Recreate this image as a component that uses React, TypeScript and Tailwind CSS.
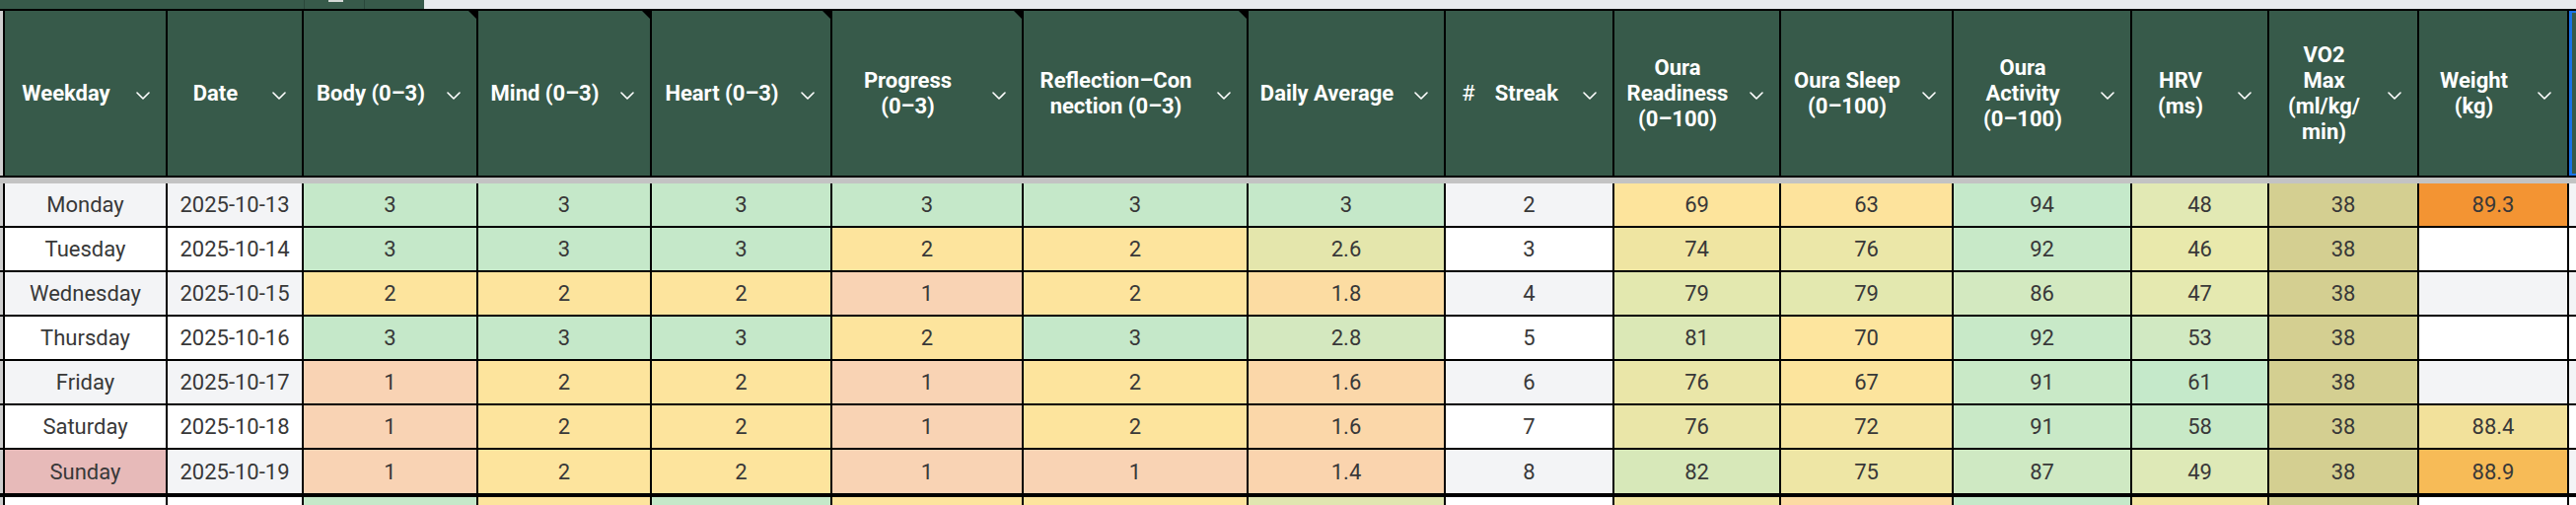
import React from "react";

const W = [165, 138, 177, 176, 183, 194, 228, 200, 171, 169, 175, 181, 139, 152, 152];

type H = { lines: string[]; note?: boolean; hash?: boolean };
const HEADERS: H[] = [
  { lines: ["Weekday"] },
  { lines: ["Date"] },
  { lines: ["Body (0–3)"], note: true },
  { lines: ["Mind (0–3)"], note: true },
  { lines: ["Heart (0–3)"], note: true },
  { lines: ["Progress", "(0–3)"], note: true },
  { lines: ["Reflection–Con", "nection (0–3)"], note: true },
  { lines: ["Daily Average"] },
  { lines: ["Streak"], hash: true },
  { lines: ["Oura", "Readiness", "(0–100)"] },
  { lines: ["Oura Sleep", "(0–100)"] },
  { lines: ["Oura", "Activity", "(0–100)"] },
  { lines: ["HRV", "(ms)"] },
  { lines: ["VO2", "Max", "(ml/kg/", "min)"] },
  { lines: ["Weight", "(kg)"] },
];

const G = "#c5e8c9";
const Y = "#fde49d";
const P = "#f9d3b4";
const VO = "#d4cf91";

type C = [string, string | null];
type Row = C[];

const ROWS: Row[] = [
  [["Monday", null], ["2025-10-13", null], ["3", G], ["3", G], ["3", G], ["3", G], ["3", G], ["3", G], ["2", null], ["69", "#fde49c"], ["63", "#fde39c"], ["94", "#c5e9ca"], ["48", "#e2e9b4"], ["38", VO], ["89.3", "#f39433"]],
  [["Tuesday", null], ["2025-10-14", null], ["3", G], ["3", G], ["3", G], ["2", Y], ["2", Y], ["2.6", "#e4e6ac"], ["3", null], ["74", "#efe5a2"], ["76", "#ebe7a8"], ["92", "#c8e9c8"], ["46", "#e9e9ac"], ["38", VO], ["", null]],
  [["Wednesday", null], ["2025-10-15", null], ["2", Y], ["2", Y], ["2", Y], ["1", P], ["2", Y], ["1.8", "#fcdca2"], ["4", null], ["79", "#e3e8af"], ["79", "#e3e8af"], ["86", "#d3e9c0"], ["47", "#e5e9b0"], ["38", VO], ["", null]],
  [["Thursday", null], ["2025-10-16", null], ["3", G], ["3", G], ["3", G], ["2", Y], ["3", G], ["2.8", "#d4e8bf"], ["5", null], ["81", "#dbe8b6"], ["70", "#fde59e"], ["92", "#c8e9c8"], ["53", "#d1e9c2"], ["38", VO], ["", null]],
  [["Friday", null], ["2025-10-17", null], ["1", P], ["2", Y], ["2", Y], ["1", P], ["2", Y], ["1.6", "#fbd7a9"], ["6", null], ["76", "#eae6a8"], ["67", "#fce49d"], ["91", "#c9e9c7"], ["61", "#c5e9ca"], ["38", VO], ["", null]],
  [["Saturday", null], ["2025-10-18", null], ["1", P], ["2", Y], ["2", Y], ["1", P], ["2", Y], ["1.6", "#fbd7a9"], ["7", null], ["76", "#eae6a8"], ["72", "#f6e5a1"], ["91", "#c9e9c7"], ["58", "#c8e9c7"], ["38", VO], ["88.4", "#f2e19b"]],
  [["Sunday", "#e7bab9"], ["2025-10-19", null], ["1", P], ["2", Y], ["2", Y], ["1", P], ["1", P], ["1.4", "#fad4ae"], ["8", null], ["82", "#d7e8b9"], ["75", "#eee6a5"], ["87", "#cfe9c3"], ["49", "#dee9b7"], ["38", VO], ["88.9", "#f7bb57"]],
];

const PARTIAL: (string | null)[] = [null, null, G, Y, G, Y, Y, "#e0e6b0", null, "#f1e5a2", "#fcdba3", G, "#f2e4a0", VO, null];

function Chevron() {
  return (
    <svg className="mr-[16px] mt-[5px] shrink-0" width="14" height="8" viewBox="0 0 14 8" fill="none">
      <polyline points="1,1 7,7 13,1" stroke="white" strokeWidth="1.6" strokeLinecap="round" strokeLinejoin="round" />
    </svg>
  );
}

function HeaderCell({ h, w }: { h: H; w: number }) {
  return (
    <div className="relative flex h-full items-center border-l-2 border-black bg-[#375a4a] text-white" style={{ width: w }}>
      <div className="min-w-0 flex-1 pl-[6px] pr-[15px] text-center text-[22px] font-bold leading-[26px]">
        {h.lines.map((l, i) => (
          <div key={i} className="whitespace-nowrap">
            {h.hash && <span className="mr-[20px] font-normal">#</span>}
            {l}
          </div>
        ))}
      </div>
      <Chevron />
      {h.note && (
        <svg className="absolute right-0 top-0" width="8" height="8" viewBox="0 0 8 8">
          <polygon points="0,0 8,0 8,8" fill="black" />
        </svg>
      )}
    </div>
  );
}

export default function App() {
  return (
    <div className="h-[512px] w-[2612px] overflow-hidden bg-white font-['Roboto',_'Liberation_Sans',_sans-serif]">
      {/* top strip */}
      <div className="flex h-[9px]">
        <div className="flex w-[430px] bg-[#375a4a]">
          <div className="w-[308px]" />
          <div className="w-[1px] bg-[#2b473b]" />
          <div className="w-[60px]">
            <div className="ml-[24px] h-[2px] w-[15px] bg-[#d5d9d7]" />
          </div>
          <div className="w-[1px] bg-[#2b473b]" />
          <div className="w-[60px]" />
        </div>
        <div className="flex-1 bg-[#e8eaed]" />
      </div>

      {/* header */}
      <div className="flex h-[171px] border-y-2 border-black">
        <div className="w-[3px] bg-[#cfcfcf]" />
        {HEADERS.map((h, i) => (
          <HeaderCell key={i} h={h} w={W[i]} />
        ))}
        <div className="h-full flex-1 border-l-2 border-black bg-[#375a4a]">
          <div className="h-full border-l-[3px] border-t-2 border-b-2 border-[#1a73e8]" />
        </div>
      </div>

      {/* frozen divider */}
      <div className="h-[6px] bg-[#c3c3c3]" />

      {/* rows */}
      {ROWS.map((r, ri) => {
        const base = ri % 2 === 0 ? "#f3f4f6" : "#ffffff";
        const last = ri === ROWS.length - 1;
        return (
          <div key={ri} className={last ? "flex h-[48px] border-b-4 border-black" : "flex h-[45px] border-b-2 border-black"}>
            <div className="w-[3px] bg-[#cfcfcf]" />
            {r.map(([t, c], ci) => (
              <div
                key={ci}
                className="flex h-full items-center justify-center border-l-2 border-black text-[22px] text-[#383838]"
                style={{ width: W[ci], backgroundColor: c ?? (ci === 1 && last ? "#f3f4f6" : base) }}
              >
                {t}
              </div>
            ))}
            <div className="h-full flex-1 border-l-2 border-black" style={{ backgroundColor: base }} />
          </div>
        );
      })}

      {/* partial row */}
      <div className="flex h-[8px]">
        <div className="w-[3px] bg-[#cfcfcf]" />
        {PARTIAL.map((c, ci) => (
          <div key={ci} className="h-full border-l-2 border-black" style={{ width: W[ci], backgroundColor: c ?? "#ffffff" }} />
        ))}
        <div className="h-full flex-1 border-l-2 border-black bg-white" />
      </div>
    </div>
  );
}
